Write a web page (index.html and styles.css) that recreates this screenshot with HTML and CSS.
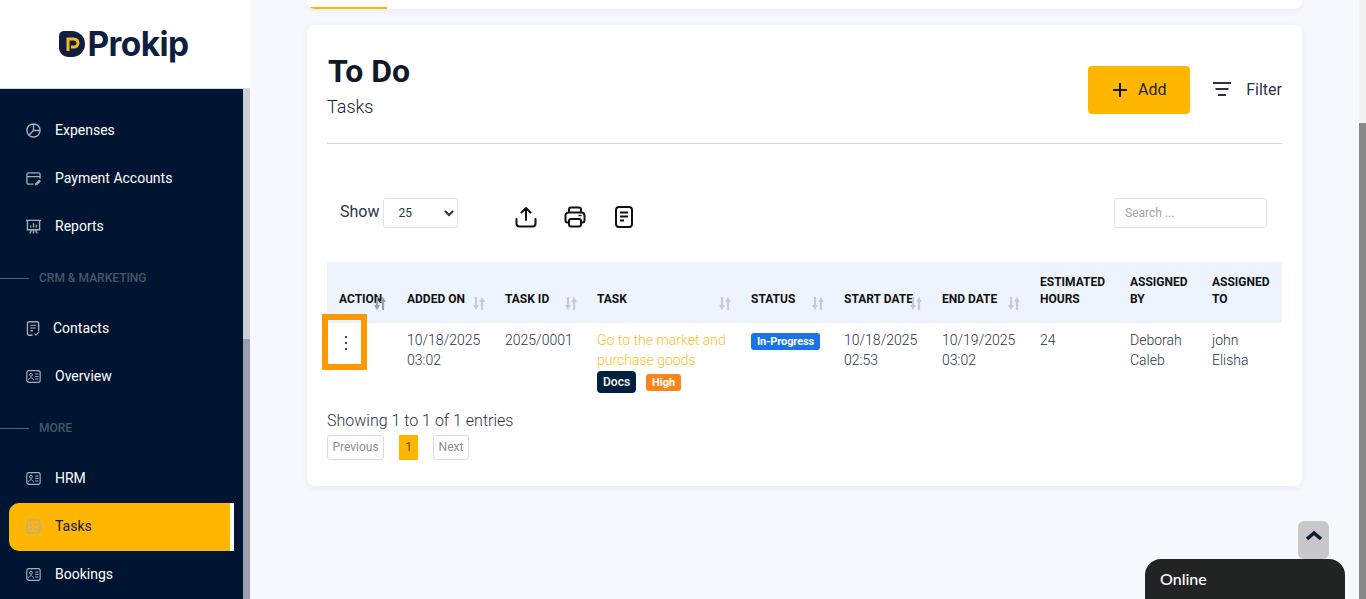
FILE: index.html
```html
<!DOCTYPE html>
<html lang="en">
<head>
    <meta charset="UTF-8">
    <meta name="viewport" content="width=device-width, initial-scale=1.0">
    <title>Prokip - Tasks</title>
    <link rel="stylesheet" href="styles.css">
</head>
<body>
    <svg class="defs" width="0" height="0">
        <symbol id="sort" viewBox="0 0 12 13">
            <path d="M3 0v9" stroke="currentColor" stroke-width="2.200" fill="none"/>
            <path d="M0 8h6l-3 5z" fill="currentColor"/>
            <path d="M9 13V4" stroke="currentColor" stroke-width="2.200" fill="none"/>
            <path d="M6 5h6L9 0z" fill="currentColor"/>
        </symbol>
        <symbol id="card" viewBox="0 0 18 16">
            <rect x="1" y="1" width="16" height="14" rx="2.500" fill="none" stroke="currentColor" stroke-width="1.400"/>
            <circle cx="6" cy="6" r="1.700" fill="none" stroke="currentColor" stroke-width="1.200"/>
            <path d="M3 12.500c.3-2 1.500-3 3-3s2.700 1 3 3M11 5h4M11 8h4M11 11h4" fill="none" stroke="currentColor" stroke-width="1.200"/>
        </symbol>
    </svg>

    <div class="app">
        <aside class="sidebar">
            <div class="logo">
                <svg class="logo-mark" width="26" height="26" viewBox="0 0 26 26">
                    <path d="M0 5a5 5 0 0 1 5-5h8a13 13 0 0 1 0 26H9a9 9 0 0 1-9-9z" fill="#0f1f3d"/>
                    <path d="M9 20V8h6a4 4 0 0 1 0 8h-3" fill="none" stroke="#f5b81f" stroke-width="3"/>
                </svg>
                <span class="logo-text">Prokip</span>
            </div>
            <div class="side-body">
                <nav class="nav">
                    <a class="nav-item">
                        <svg class="nav-icon" viewBox="0 0 16 16"><circle cx="8" cy="8" r="7" fill="none" stroke="currentColor" stroke-width="1.500"/><path d="M8 1v7h7M8 8l-5 5" fill="none" stroke="currentColor" stroke-width="1.500"/></svg>
                        <span>Expenses</span>
                    </a>
                    <a class="nav-item">
                        <svg class="nav-icon" viewBox="0 0 16 16"><path d="M8 14H2.500A1.500 1.500 0 0 1 1 12.500v-9A1.500 1.500 0 0 1 2.500 2h11A1.500 1.500 0 0 1 15 3.500V8M1 6h14" fill="none" stroke="currentColor" stroke-width="1.400"/><path d="M9.500 15.500l.5-2.500 4-4 2 2-4 4z" fill="currentColor"/></svg>
                        <span>Payment Accounts</span>
                    </a>
                    <a class="nav-item">
                        <svg class="nav-icon" viewBox="0 0 16 16"><path d="M0 1.500h16M1.500 1.500v10h13v-10M4 15.500l2-4M12 15.500l-2-4M8 11.500v4" fill="none" stroke="currentColor" stroke-width="1.500"/><path d="M5 9V7M8 9V4.500M11 9V6" fill="none" stroke="currentColor" stroke-width="1.400"/></svg>
                        <span>Reports</span>
                    </a>
                    <div class="nav-label crm">CRM &amp; MARKETING</div>
                    <a class="nav-item contacts">
                        <svg class="nav-icon" viewBox="0 0 16 16"><path d="M7 15.200H3.500a2 2 0 0 1-2-2V2.800a2 2 0 0 1 2-2h8a2 2 0 0 1 2 2v8" fill="none" stroke="currentColor" stroke-width="1.400"/><path d="M4.500 4.500h6M4.500 7.500h6M4.500 10.500h3M9 13.500l1.500 1.500 3.500-3.500" fill="none" stroke="currentColor" stroke-width="1.200"/></svg>
                        <span>Contacts</span>
                    </a>
                    <a class="nav-item overview">
                        <svg class="nav-icon"><use href="#card"/></svg>
                        <span>Overview</span>
                    </a>
                    <div class="nav-label more">MORE</div>
                    <a class="nav-item">
                        <svg class="nav-icon"><use href="#card"/></svg>
                        <span>HRM</span>
                    </a>
                    <a class="nav-item active">
                        <svg class="nav-icon" viewBox="0 0 16 16"><rect x="1" y="1" width="14" height="14" rx="4" fill="none" stroke="currentColor" stroke-width="1.400"/><path d="M3.500 6l1 1 1.500-2M3.500 11l1 1 1.500-2M8 6h4.500M8 11h4.500" fill="none" stroke="currentColor" stroke-width="1.200"/></svg>
                        <span>Tasks</span>
                    </a>
                    <a class="nav-item">
                        <svg class="nav-icon"><use href="#card"/></svg>
                        <span>Bookings</span>
                    </a>
                </nav>
                <div class="side-scroll"><div class="side-thumb"></div></div>
            </div>
        </aside>

        <main class="main">
            <div class="top-card"><div class="top-tab"></div></div>

            <section class="card">
                <header class="card-head">
                    <div>
                        <h1>To Do</h1>
                        <p class="subtitle">Tasks</p>
                    </div>
                    <div class="head-actions">
                        <button class="add-btn">
                            <svg width="16" height="16" viewBox="0 0 16 16"><path d="M8 1v14M1 8h14" stroke="#0f1b33" stroke-width="2"/></svg>
                            Add
                        </button>
                        <div class="filter">
                            <svg width="18" height="14" viewBox="0 0 18 14"><path d="M0 1h18M2.500 7h13M5 13h8" stroke="#2b3445" stroke-width="2"/></svg>
                            Filter
                        </div>
                    </div>
                </header>

                <div class="toolbar">
                    <label class="show"><span class="show-text">Show</span>
                        <select class="show-select"><option>25</option></select>
                    </label>
                    <div class="tools">
                        <svg width="22" height="22" viewBox="0 0 22 22"><path d="M11 14V2M6.500 6.500L11 2l4.500 4.500M1.500 13v4.500a3 3 0 0 0 3 3h13a3 3 0 0 0 3-3V13" fill="none" stroke="#111" stroke-width="2" stroke-linecap="round" stroke-linejoin="round"/></svg>
                        <svg width="22" height="22" viewBox="0 0 22 22"><path d="M5 7V3.500a2 2 0 0 1 2-2h8a2 2 0 0 1 2 2V7M5 16.500H3.500a2 2 0 0 1-2-2V9.500a3 3 0 0 1 3-3h13a3 3 0 0 1 3 3v5a2 2 0 0 1-2 2H17" fill="none" stroke="#111" stroke-width="2"/><rect x="5" y="13" width="12" height="7.500" rx="2" fill="none" stroke="#111" stroke-width="2"/><path d="M14.500 9.500h3" stroke="#111" stroke-width="1.500"/></svg>
                        <svg width="22" height="22" viewBox="0 0 22 22"><rect x="3" y="1" width="16" height="20" rx="3" fill="none" stroke="#111" stroke-width="2"/><path d="M7 6.500h8M7 10.500h8M7 14.500h4" stroke="#111" stroke-width="2"/></svg>
                    </div>
                    <input class="search" type="text" placeholder="Search ...">
                </div>

                <table class="tasks">
                    <colgroup>
                        <col class="c-action"><col class="c-added"><col class="c-id"><col class="c-task"><col class="c-status"><col class="c-date"><col class="c-date"><col class="c-hours"><col class="c-by"><col class="c-to">
                    </colgroup>
                    <thead>
                        <tr>
                            <th>Action<svg class="sort sort-action"><use href="#sort"/></svg></th>
                            <th>Added on<svg class="sort"><use href="#sort"/></svg></th>
                            <th>Task ID<svg class="sort"><use href="#sort"/></svg></th>
                            <th>Task<svg class="sort"><use href="#sort"/></svg></th>
                            <th>Status<svg class="sort"><use href="#sort"/></svg></th>
                            <th>Start date<svg class="sort"><use href="#sort"/></svg></th>
                            <th>End date<svg class="sort"><use href="#sort"/></svg></th>
                            <th>Estimated hours</th>
                            <th>Assigned by</th>
                            <th>Assigned to</th>
                        </tr>
                    </thead>
                    <tbody>
                        <tr>
                            <td class="action-cell">
                                <div class="action-mark">
                                    <svg width="4" height="16" viewBox="0 0 4 16"><circle cx="2" cy="2" r="1.100" fill="#14143c"/><circle cx="2" cy="8" r="1.100" fill="#14143c"/><circle cx="2" cy="14" r="1.100" fill="#14143c"/></svg>
                                </div>
                            </td>
                            <td>10/18/2025 03:02</td>
                            <td>2025/0001</td>
                            <td>
                                <a class="task-link">Go to the market and purchase goods</a>
                                <div class="task-tags"><span class="tag tag-docs">Docs</span><span class="tag tag-high">High</span></div>
                            </td>
                            <td><span class="tag tag-status">In-Progress</span></td>
                            <td>10/18/2025 02:53</td>
                            <td>10/19/2025 03:02</td>
                            <td>24</td>
                            <td>Deborah Caleb</td>
                            <td>john Elisha</td>
                        </tr>
                    </tbody>
                </table>

                <p class="entries">Showing 1 to 1 of 1 entries</p>
                <div class="pager">
                    <a class="page-btn page-prev">Previous</a>
                    <a class="page-num">1</a>
                    <a class="page-btn page-next">Next</a>
                </div>
            </section>
        </main>

        <div class="page-scroll"><div class="page-thumb"></div></div>
    </div>

    <button class="to-top">
        <svg width="18" height="11" viewBox="0 0 18 11"><path d="M2 9l7-6 7 6" fill="none" stroke="#0f1b33" stroke-width="3.500"/></svg>
    </button>
    <div class="chat">Online</div>
</body>
</html>
```

FILE: styles.css
```css
* {
    box-sizing: border-box;
}
html, body {
    height: 100%;
    margin: 0;
    overflow: hidden;
}
body {
    font-family: Roboto, "Liberation Sans", sans-serif;
    font-size: 14px;
    color: #2b3445;
    background-color: #f7f8fe;
}
.defs {
    display: block;
    height: 0;
}
.app {
    display: flex;
    height: 599px;
}

/* sidebar */
.sidebar {
    width: 250px;
    flex: none;
    display: flex;
    flex-direction: column;
}
.logo {
    height: 89px;
    flex: none;
    display: flex;
    align-items: center;
    justify-content: center;
    gap: 2px;
    padding: 0 2px 0 0;
    background-color: #fff;
    border-bottom: 1px solid #d5d7dc;
}
.logo-mark {
    margin-top: -1px;
}
.logo-text {
    font-family: Inter, Roboto, sans-serif;
    font-size: 33.500px;
    line-height: 40px;
    font-weight: 700;
    letter-spacing: -0.6px;
    color: #0f1f3d;
}
.side-body {
    flex: 1;
    display: flex;
    min-height: 0;
}
.nav {
    flex: 1;
    padding-top: 18px;
    overflow: hidden;
    background-color: #001531;
}
.side-scroll {
    width: 7px;
    flex: none;
    display: flex;
    flex-direction: column;
    background-color: #cdcfd6;
}
.side-thumb {
    margin-top: 250px;
    flex: 1;
    background-color: #9aa0ad;
}
.nav-item {
    display: flex;
    align-items: center;
    gap: 14px;
    height: 48px;
    margin-left: 9px;
    margin-right: 9px;
    padding: 0 0 2px 16px;
    font-size: 14px;
    font-weight: 400;
    color: #fff;
}
.nav-item.contacts {
    gap: 12px;
}
.nav-item.overview {
    gap: 14px;
}
.nav-icon {
    width: 15px;
    height: 15px;
    flex: none;
    margin-left: 1px;
    color: #a8aeb9;
}
.nav-item.active {
    color: #10192e;
    background-color: #ffb600;
    border-radius: 10px 0 0 10px;
    border-right: 4px solid #fff;
}
.nav-label {
    display: flex;
    align-items: center;
    gap: 10px;
    font-size: 12px;
    font-weight: 500;
    color: #4a5568;
}
.nav-label::before {
    content: "";
    width: 29px;
    height: 1px;
    background-color: #555f70;
}
.nav-label.crm {
    height: 54px;
}
.nav-label.more {
    height: 54px;
}

/* main content */
.main {
    flex: 1;
    min-width: 0;
    padding: 0 57px;
}
.top-card {
    height: 9px;
    background-color: #fff;
    border-radius: 0 0 8px 8px;
    box-shadow: 0 2px 6px rgba(40, 50, 90, 0.06);
    display: flex;
    align-items: flex-end;
    overflow: hidden;
}
.top-tab {
    width: 80px;
    height: 2px;
    background-color: #ffb600;
}
.card {
    position: relative;
    margin-top: 16px;
    height: 461px;
    padding: 0 20px;
    background-color: #fff;
    border-radius: 8px;
    box-shadow: 0 2px 6px rgba(40, 50, 90, 0.06);
}
.card-head {
    display: flex;
    justify-content: space-between;
    height: 119px;
    padding-top: 26px;
    border-bottom: 1px solid #d8d8d8;
}
h1 {
    margin: 0;
    padding-left: 1px;
    font-size: 32px;
    line-height: 40px;
    font-weight: 700;
    color: #111827;
}
.subtitle {
    margin: 4px 0 0 0;
    font-size: 18px;
    line-height: 24px;
    font-weight: 300;
    color: #1d2436;
}
.head-actions {
    display: flex;
    align-items: flex-start;
    padding-top: 15px;
}
.add-btn {
    display: flex;
    align-items: center;
    justify-content: center;
    gap: 10px;
    width: 102px;
    height: 48px;
    padding: 0 0 2px 0;
    font-family: inherit;
    font-size: 16px;
    color: #1d2436;
    background-color: #ffb600;
    border: none;
    border-radius: 4px;
}
.add-btn svg {
    margin-top: 2px;
}
.filter {
    display: flex;
    align-items: center;
    gap: 15px;
    height: 48px;
    margin-left: 23px;
    padding-bottom: 2px;
    font-size: 16px;
}
.toolbar {
    display: flex;
    align-items: center;
    height: 30px;
    margin-top: 54px;
    padding: 0 15px 0 13px;
}
.show {
    display: flex;
    align-items: center;
    gap: 4px;
    font-size: 16px;
    font-weight: 400;
}
.show-text {
    margin-top: -4px;
}
.show-select {
    width: 75px;
    height: 30px;
    padding-left: 10px;
    font-family: inherit;
    font-size: 12px;
    color: #2b3445;
    background-color: #fff;
    border: 1px solid #e2e2e2;
    border-radius: 3px;
}
.tools {
    display: flex;
    gap: 27px;
    margin-left: 57px;
    margin-top: 8px;
    flex: 1;
}
.search {
    width: 153px;
    height: 30px;
    padding: 0 10px;
    font-family: inherit;
    font-size: 12px;
    border: 1px solid #e2e2e2;
    border-radius: 3px;
}
.search::placeholder {
    color: #a3a3a3;
}

/* table */
.tasks {
    width: 955px;
    margin-top: 34px;
    border-collapse: collapse;
    table-layout: fixed;
}
.c-action { width: 68px; }
.c-added { width: 98px; }
.c-id { width: 92px; }
.c-task { width: 154px; }
.c-status { width: 93px; }
.c-date { width: 98px; }
.c-hours { width: 90px; }
.c-by { width: 82px; }
.c-to { width: 82px; }
.tasks th {
    position: relative;
    height: 61px;
    padding: 0 12px 15px 12px;
    font-size: 12px;
    line-height: 17px;
    font-weight: 700;
    text-align: left;
    text-transform: uppercase;
    vertical-align: bottom;
    color: #111;
    background-color: #edf4fe;
}
.sort {
    position: absolute;
    right: 8px;
    top: 35px;
    width: 12px;
    height: 13px;
    color: #c6cbd2;
}
.sort-action {
    right: 9px;
    color: #9aa0a8;
}
.tasks td {
    padding: 7px 12px 0 12px;
    font-size: 14px;
    line-height: 20px;
    font-weight: 300;
    vertical-align: top;
    color: #2b3445;
}
.tasks td.action-cell {
    position: relative;
}
.action-mark {
    position: absolute;
    left: -5px;
    top: -9px;
    width: 45px;
    height: 56px;
    display: flex;
    align-items: center;
    justify-content: center;
    border: 6px solid #ff9800;
    padding: 2px 0 0 2px;
}
.task-link {
    color: #ffbe26;
}
.task-tags {
    display: flex;
    align-items: center;
    gap: 10px;
    margin-top: 1px;
}
.tag {
    display: inline-block;
    font-size: 11px;
    line-height: 17px;
    font-weight: 700;
    color: #fff;
    border-radius: 3px;
    padding: 0 6px;
}
.tag-docs {
    padding: 2px 6px;
    font-size: 12px;
    font-weight: 500;
    line-height: 18px;
    background-color: #00203f;
    border-radius: 4px;
}
.tag-high {
    background-color: #ff8418;
}
.tag-status {
    display: block;
    width: 69px;
    margin-top: 3px;
    padding: 0;
    letter-spacing: -0.1px;
    text-align: center;
    background-color: #1a73e8;
}
.entries {
    margin: 18px 0 0 0;
    font-size: 16px;
    line-height: 20px;
    font-weight: 300;
}
.pager {
    display: flex;
    align-items: flex-start;
    margin-top: 4px;
    font-size: 12px;
    color: #888e9c;
}
.page-btn {
    height: 25px;
    line-height: 23px;
    text-align: center;
    font-weight: 400;
    border: 1px solid #dcdcdc;
    border-radius: 3px;
}
.page-prev {
    width: 57px;
}
.page-next {
    width: 36px;
}
.page-num {
    width: 19px;
    height: 25px;
    line-height: 25px;
    margin: 0 15px;
    text-align: center;
    color: #5d5330;
    background-color: #ffb600;
}

/* page scrollbar */
.page-scroll {
    width: 7px;
    flex: none;
    display: flex;
    flex-direction: column;
    background-color: #f1f1f1;
}
.page-thumb {
    margin-top: 123px;
    flex: 1;
    background-color: #888;
}

/* things floating over the page */
.to-top {
    position: fixed;
    left: 1298px;
    top: 521px;
    width: 31px;
    height: 38px;
    padding: 0 0 8px 0;
    background-color: #c8c8ca;
    border: none;
    border-radius: 6px;
}
.chat {
    position: fixed;
    left: 1145px;
    top: 559px;
    width: 200px;
    height: 40px;
    padding: 10px 15px 0 15px;
    font-family: Lato, sans-serif;
    font-size: 16px;
    font-weight: 500;
    color: #fff;
    background-color: #222423;
    border-radius: 16px 16px 0 0;
}
```
